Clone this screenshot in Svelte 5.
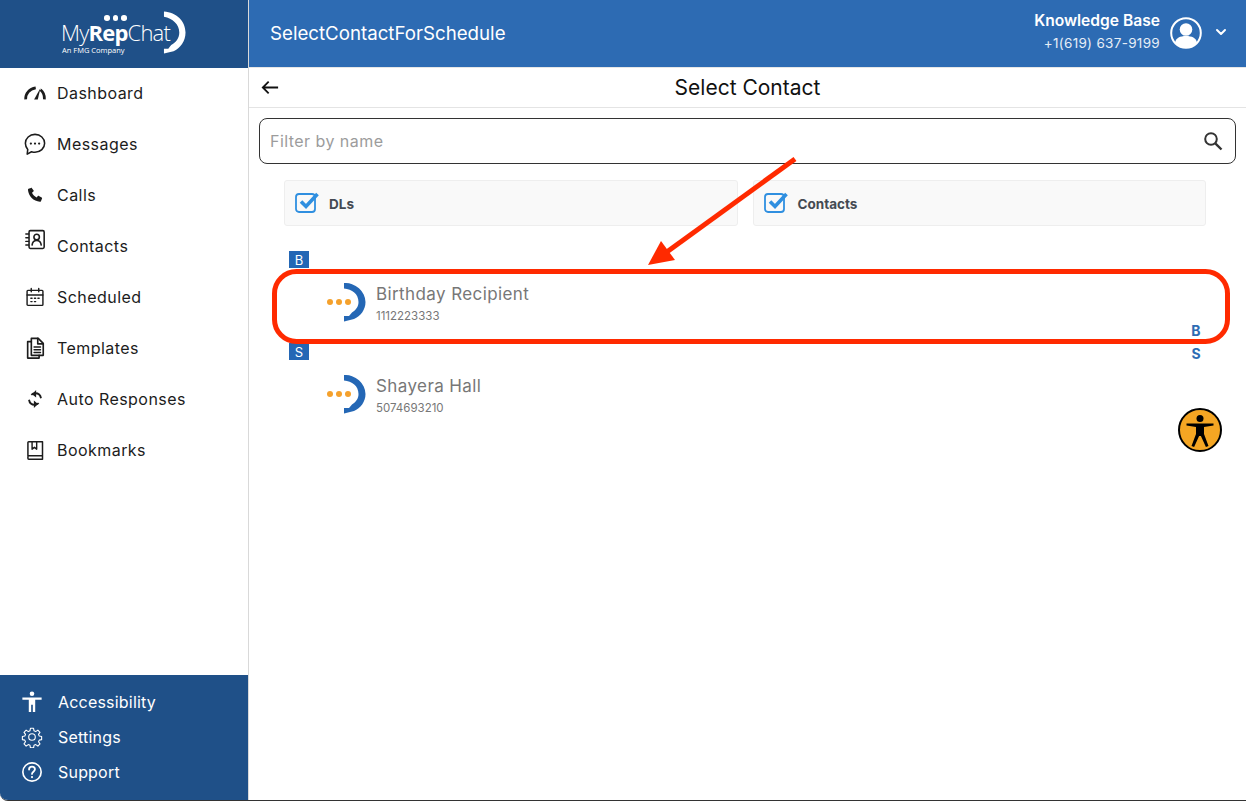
<script>
  const navItems = [
    { label: 'Dashboard', icon: 'gauge' },
    { label: 'Messages', icon: 'chat' },
    { label: 'Calls', icon: 'phone' },
    { label: 'Contacts', icon: 'book' },
    { label: 'Scheduled', icon: 'calendar' },
    { label: 'Templates', icon: 'file' },
    { label: 'Auto Responses', icon: 'sync' },
    { label: 'Bookmarks', icon: 'bookmark' }
  ];

  const groups = [
    { letter: 'B', name: 'Birthday Recipient', phone: '1112223333' },
    { letter: 'S', name: 'Shayera Hall', phone: '5074693210' }
  ];

  const filters = ['DLs', 'Contacts'];
</script>

{#snippet navIcon(name)}
  <svg class="nav-icon {name}" viewBox="0 0 24 24" fill="none" stroke="#1c1c1c" stroke-width="1.6" stroke-linecap="round" stroke-linejoin="round">
    {#if name === 'gauge'}
      <path d="M1.800 19c-.3-6.500 4-11.500 11-12.500" stroke-width="3" stroke-linecap="butt" />
      <path d="M18 8.500c3 2.500 4.500 6 4.200 10.500" stroke-width="3" stroke-linecap="butt" />
      <path d="M11 19 18 6.500 15 19z" fill="#1c1c1c" stroke="none" />
    {:else if name === 'chat'}
      <path d="M12 1.500c5.900 0 10.500 4.300 10.500 9.700S17.900 21 12 21c-1.300 0-2.600-.2-3.800-.6L3.500 23l.6-5.100C2.500 16 1.500 13.700 1.500 11.200 1.500 5.800 6.100 1.500 12 1.500z" stroke-width="1.700" />
      <circle cx="7.500" cy="11.500" r="1.200" fill="#1c1c1c" stroke="none" />
      <circle cx="12" cy="11.500" r="1.200" fill="#1c1c1c" stroke="none" />
      <circle cx="16.500" cy="11.500" r="1.200" fill="#1c1c1c" stroke="none" />
    {:else if name === 'phone'}
      <path d="M6.600 2.500 3.300 3.700C2.800 4 2.500 4.500 2.600 5.100c.7 8.500 7.400 15.300 16 16 .6 0 1.100-.3 1.300-.8l1.500-3.500c.2-.5 0-1.100-.5-1.400l-3.700-2.200c-.4-.3-1-.2-1.400.2l-1.600 2c-2.800-1.300-5-3.500-6.200-6.300l1.900-1.700c.4-.4.500-1 .3-1.400L7.900 3c-.3-.5-.8-.7-1.300-.5z" fill="#1c1c1c" stroke="none" />
    {:else if name === 'book'}
      <rect x="5.500" y="1.800" width="16.500" height="19.400" rx="1.500" stroke-width="1.700" />
      <circle cx="13.800" cy="8.700" r="3" stroke-width="1.700" />
      <path d="M8.800 17.500c.4-3.500 2.400-5 5-5s4.600 1.500 5 5" stroke-width="1.700" />
      <path d="M2 5.500h3M2 9.500h3M2 13.500h3M2 17.500h3" />
    {:else if name === 'calendar'}
      <rect x="2.500" y="4" width="19" height="18" rx="1" stroke-width="1.700" />
      <path d="M2.500 9.500h19M7.500 1.800v4M16.500 1.800v4" stroke-width="1.700" />
      <path d="M7 13.500h1.500M11.300 13.500h1.500M15.500 13.500h1.500M7 17.500h1.500M11.300 17.500h1.500" />
    {:else if name === 'file'}
      <path d="M8 1.500h7.500l5.500 5.500v13H8z" stroke-width="1.800" />
      <path d="M15 1.500V7.500h6" stroke-width="1.800" />
      <path d="M8 5H4v18h12.500v-3" stroke-width="1.800" />
      <path d="M11 11h7M11 14h7M11 17h7" />
    {:else if name === 'sync'}
      <path d="M20 11c-.6-4-3.700-6.700-7.700-6.700-2 0-3.800.8-5.200 2.100" stroke-width="2.400" stroke-linecap="butt" />
      <path d="M4 13c.6 4 3.700 6.700 7.700 6.700 2 0 3.800-.8 5.200-2.100" stroke-width="2.400" stroke-linecap="butt" />
      <path d="M13.500 0 8 5.500 13.500 10zM10.500 14l5.500 4.500L10.500 24z" fill="#1c1c1c" stroke="none" />
    {:else if name === 'bookmark'}
      <path d="M3.500 19V3c0-.6.400-1 1-1H21v21H4.500c-.6 0-1-.4-1-1v-2c0-.6.400-1 1-1H21" stroke-width="1.800" />
      <path d="M8.500 2v9l2.800-2.200L14 11V2" stroke-width="1.700" />
    {/if}
  </svg>
{/snippet}

{#snippet avatarLogo()}
  <svg class="contact-logo" viewBox="0 0 40 40">
    <circle cx="3" cy="19" r="3" fill="#f5a12c" />
    <circle cx="12" cy="19" r="3" fill="#f5a12c" />
    <circle cx="21" cy="19" r="3" fill="#f5a12c" />
    <path d="M17 0A20.500 19.500 0 0 1 38.500 19C38.500 27 33.500 33 27 36L17 38.500V33L22 33 25 29.500C29 27 31.500 23.500 31.500 19 31.500 11 25 6 17 5.500z" fill="#2467b5" />
  </svg>
{/snippet}

<div class="window">
  <aside class="sidebar">
    <div class="brand">
      <div class="brand-mark">
        <div class="dots"><i></i><i></i><i></i></div>
        <div class="wordmark">My<b>Rep</b>Chat</div>
        <div class="tagline">An FMG Company</div>
        <svg class="brand-arc" viewBox="0 0 24 44">
          <path d="M1 0C14 1 23.500 10 23.500 22 23.500 31 18 38.500 11 41.500L1 44V39L5.500 39 8.500 35C13.500 32.500 17 28 17 22 17 13.500 10 7 1 5.500z" fill="#fff" />
        </svg>
      </div>
    </div>

    <nav class="nav">
      {#each navItems as item}
        <div class="nav-item">
          <span class="icon-slot">{@render navIcon(item.icon)}</span>
          <span>{item.label}</span>
        </div>
      {/each}
    </nav>

    <div class="side-footer">
      <div class="foot-item">
        <svg class="foot-icon" viewBox="0 0 24 24" fill="#fff">
          <circle cx="12" cy="3" r="2.500" />
          <path d="M1.500 7h21v2.600h-7V23h-2.600v-8h-1.800v8H8.500V9.600h-7z" />
        </svg>
        <span>Accessibility</span>
      </div>
      <div class="foot-item">
        <svg class="foot-icon" viewBox="0 0 24 24" fill="none" stroke="#fff" stroke-width="1.200" stroke-linejoin="round">
          <circle cx="12" cy="12" r="3.600" />
          <path d="M10.300 2.500h3.400l.5 2.800 1.800.8 2.400-1.600 2.300 2.400-1.600 2.300.8 1.800 2.600.5v3.400l-2.600.5-.8 1.800 1.600 2.300-2.300 2.400-2.400-1.600-1.800.8-.5 2.800h-3.400l-.5-2.800-1.800-.8-2.400 1.600-2.300-2.400 1.600-2.300-.8-1.800-2.600-.5v-3.400l2.600-.5.8-1.800-1.600-2.300 2.300-2.400 2.400 1.600 1.800-.8z" />
        </svg>
        <span>Settings</span>
      </div>
      <div class="foot-item">
        <svg class="foot-icon" viewBox="0 0 24 24" fill="none" stroke="#fff" stroke-width="1.800" stroke-linecap="round">
          <circle cx="12" cy="12" r="10" />
          <path d="M8.800 9.300c0-1.900 1.400-3.100 3.200-3.100s3.200 1.200 3.200 2.900c0 2.500-3.200 2.600-3.200 5" stroke-width="2" />
          <circle cx="12" cy="17.500" r="1.200" fill="#fff" stroke="none" />
        </svg>
        <span>Support</span>
      </div>
    </div>
  </aside>

  <main class="main">
    <header class="topbar">
      <div class="title">SelectContactForSchedule</div>
      <div class="account">
        <div class="account-text">
          <div class="account-name">Knowledge Base</div>
          <div class="account-phone">+1(619) 637-9199</div>
        </div>
        <svg class="account-avatar" viewBox="0 0 32 32">
          <circle cx="16" cy="16" r="14.800" fill="none" stroke="#fff" stroke-width="2" />
          <circle cx="16" cy="12.500" r="6.300" fill="#fff" />
          <path d="M5 25.500c1-4.500 5-6.500 11-6.500s10 2 11 6.500C24.500 28.500 20.500 30.500 16 30.500S7.500 28.500 5 25.500z" fill="#fff" />
        </svg>
        <svg class="account-caret" viewBox="0 0 12 8" fill="none" stroke="#fff" stroke-width="2" stroke-linecap="round" stroke-linejoin="round">
          <path d="M2 2l4 4 4-4" />
        </svg>
      </div>
    </header>

    <div class="subbar">
      <svg class="back" viewBox="0 0 20 16" fill="none" stroke="#111" stroke-width="2">
        <path d="M19 8H2M8.500 1.500 2 8l6.500 6.500" />
      </svg>
      <h1>Select Contact</h1>
    </div>

    <div class="content">
      <div class="search">
        <span>Filter by name</span>
        <svg viewBox="0 0 20 20" fill="none" stroke="#333" stroke-width="2">
          <circle cx="8" cy="8" r="5.800" />
          <path d="M12.300 12.300 18.500 18.500" stroke-width="2.400" />
        </svg>
      </div>

      <div class="filters">
        {#each filters as filter}
          <div class="filter">
            <svg viewBox="0 0 24 22" fill="none">
              <rect x="1" y="3" width="19" height="18" rx="3" stroke="#2f8fe0" stroke-width="1.800" />
              <path d="M6 10.500l5 5L22.500 3" stroke="#2f8fe0" stroke-width="3.600" />
            </svg>
            <span>{filter}</span>
          </div>
        {/each}
      </div>

      <div class="list">
        {#each groups as group}
          <div class="letter">{group.letter}</div>
          <div class="contact">
            {@render avatarLogo()}
            <div class="contact-text">
              <div class="contact-name">{group.name}</div>
              <div class="contact-phone">{group.phone}</div>
            </div>
          </div>
        {/each}
      </div>
    </div>
  </main>

  <div class="index">
    {#each groups as group}
      <span>{group.letter}</span>
    {/each}
  </div>

  <svg class="a11y" viewBox="0 0 44 44">
    <circle cx="22" cy="22" r="21" fill="#f5a623" stroke="#000" stroke-width="2" />
    <circle cx="22" cy="10.500" r="3.500" fill="#000" />
    <path d="M8.500 15.500h27v2l-9.500 1.500v7L30.500 38l-2.600 1-5-11h-1.800l-5 11-2.600-1L18 26v-7l-9.500-1.500z" fill="#000" />
  </svg>

  <svg class="callout" viewBox="0 0 1246 801">
    <rect x="274.500" y="271.500" width="953" height="70" rx="22" fill="none" stroke="#ff2a00" stroke-width="5" />
    <path d="M795 159 664 254" stroke="#ff2a00" stroke-width="5" fill="none" />
    <path d="M648 265 661 241 675 260z" fill="#ff2a00" />
  </svg>
</div>

<style>
  :global(body) {
    margin: 0;
    background: #fff;
  }

  .window {
    position: relative;
    display: flex;
    width: 1246px;
    height: 800px;
    overflow: hidden;
    border-bottom: 1px solid #333;
    border-bottom-left-radius: 8px;
    font-family: Inter, sans-serif;
  }

  .sidebar {
    display: flex;
    flex-direction: column;
    flex: 0 0 248px;
    border-right: 1px solid #d9d9d9;
  }

  .brand {
    display: flex;
    justify-content: center;
    height: 68px;
    background: #1f5088;
  }

  .brand-mark {
    position: relative;
    width: 124px;
    color: #fff;
    font-family: "Open Sans", sans-serif;
  }

  .dots {
    display: flex;
    gap: 3px;
    position: absolute;
    left: 42px;
    top: 15px;
  }

  .dots i {
    width: 5.500px;
    height: 5.500px;
    border-radius: 50%;
    background: #fff;
  }

  .wordmark {
    position: absolute;
    left: -1px;
    top: 17px;
    font-size: 22px;
    font-weight: 300;
    letter-spacing: -0.8px;
    white-space: nowrap;
  }

  .wordmark b {
    font-weight: 700;
  }

  .tagline {
    position: absolute;
    left: 0;
    top: 45px;
    font-size: 7.500px;
    font-weight: 500;
    white-space: nowrap;
  }

  .brand-arc {
    position: absolute;
    left: 101px;
    top: 11px;
    width: 23px;
    height: 43px;
  }

  .nav {
    flex: 1;
  }

  .nav-item {
    display: flex;
    align-items: center;
    gap: 11px;
    height: 51px;
    padding-left: 24px;
    font-size: 16px;
    letter-spacing: 0.45px;
    color: #1c1c1c;
    box-sizing: border-box;
    padding-bottom: 2px;
  }

  .icon-slot {
    display: flex;
    align-items: center;
    justify-content: center;
    width: 22px;
    height: 22px;
    flex: none;
  }

  .nav-icon {
    width: 22px;
    height: 22px;
    flex: none;
  }

  .nav-icon.phone,
  .nav-icon.sync {
    width: 18px;
    height: 18px;
  }

  .nav-icon.bookmark,
  .nav-icon.calendar {
    width: 20px;
    height: 20px;
  }

  .nav-icon.book {
    margin-top: -12px;
  }

  .side-footer {
    height: 125px;
    padding-top: 10px;
    box-sizing: border-box;
    background: #1f5088;
    color: #fff;
  }

  .foot-item {
    display: flex;
    align-items: center;
    gap: 15px;
    height: 35px;
    padding: 0 0 2px 21px;
    box-sizing: border-box;
    font-size: 16px;
    letter-spacing: 0.2px;
  }

  .foot-icon {
    width: 22px;
    height: 22px;
    flex: none;
  }

  .main {
    display: flex;
    flex-direction: column;
    flex: 1;
    min-width: 0;
  }

  .topbar {
    display: flex;
    align-items: center;
    justify-content: space-between;
    height: 67px;
    padding: 0 19px 0 21px;
    background: #2d6bb3;
    color: #fff;
    box-sizing: border-box;
  }

  .title {
    font-size: 18.700px;
  }

  .account {
    display: flex;
    align-items: center;
    margin-top: -1px;
  }

  .account-text {
    text-align: right;
    margin-right: -2px;
  }

  .account-name {
    font-size: 15.600px;
    font-weight: 600;
    line-height: 23px;
    margin-top: -2px;
  }

  .account-phone {
    font-size: 13.500px;
    line-height: 23px;
    letter-spacing: 0.3px;
    color: #e6eef7;
  }

  .account-avatar {
    width: 32px;
    height: 32px;
    margin-left: 12px;
  }

  .account-caret {
    width: 12px;
    height: 8px;
    margin-left: 13px;
    margin-top: -2px;
  }

  .subbar {
    display: flex;
    align-items: center;
    justify-content: center;
    position: relative;
    height: 41px;
    box-sizing: border-box;
    border-top: 1px solid #e6e6e6;
    border-bottom: 1px solid #e4e4e4;
  }

  .subbar h1 {
    margin: 0;
    font-size: 21px;
    font-weight: 400;
    color: #111;
  }

  .back {
    position: absolute;
    left: 12px;
    top: 12px;
    width: 18px;
    height: 15px;
  }

  .content {
    padding: 10px 10px 0;
  }

  .search {
    display: flex;
    align-items: center;
    justify-content: space-between;
    height: 46px;
    box-sizing: border-box;
    padding: 0 12px 0 10px;
    border: 1px solid #333;
    border-radius: 8px;
    color: #9c9c9c;
    font-size: 16px;
    letter-spacing: 0.45px;
  }

  .search svg {
    width: 20px;
    height: 20px;
  }

  .filters {
    display: flex;
    gap: 15px;
    margin: 16px 30px 0 25px;
  }

  .filter {
    display: flex;
    flex: 1;
    align-items: center;
    gap: 10px;
    height: 46px;
    box-sizing: border-box;
    padding-left: 10px;
    background: #f9f9f9;
    border: 1px solid #eeeeee;
    border-radius: 3px;
    font-size: 13.500px;
    font-weight: 700;
    color: #444a52;
  }

  .filter span {
    margin-top: 1px;
  }

  .filter svg {
    width: 24px;
    height: 22px;
    margin-top: -2px;
  }

  .list {
    margin: 25px 0 0 30px;
  }

  .letter {
    width: 20px;
    height: 17px;
    background: #2467b5;
    color: #fff;
    font-size: 13px;
    line-height: 18px;
    text-align: center;
  }

  .contact {
    display: flex;
    align-items: flex-start;
    gap: 9px;
    height: 75px;
    padding: 14px 0 0 38px;
    box-sizing: border-box;
  }

  .contact-logo {
    width: 40px;
    height: 40px;
    flex: none;
    margin-top: 1px;
  }

  .contact-name {
    font-size: 17px;
    line-height: 25px;
    letter-spacing: 0.4px;
    color: #777;
  }

  .contact-phone {
    font-size: 11.500px;
    line-height: 18px;
    color: #777;
  }

  .index {
    position: absolute;
    top: 322px;
    left: 1186px;
    width: 20px;
    display: flex;
    flex-direction: column;
    align-items: center;
    gap: 5px;
    font-size: 14px;
    line-height: 18px;
    font-weight: 700;
    color: #2d6bb3;
  }

  .a11y {
    position: absolute;
    left: 1178px;
    top: 408px;
    width: 44px;
    height: 44px;
  }

  .callout {
    position: absolute;
    inset: 0;
    width: 1246px;
    height: 801px;
    pointer-events: none;
  }
</style>
